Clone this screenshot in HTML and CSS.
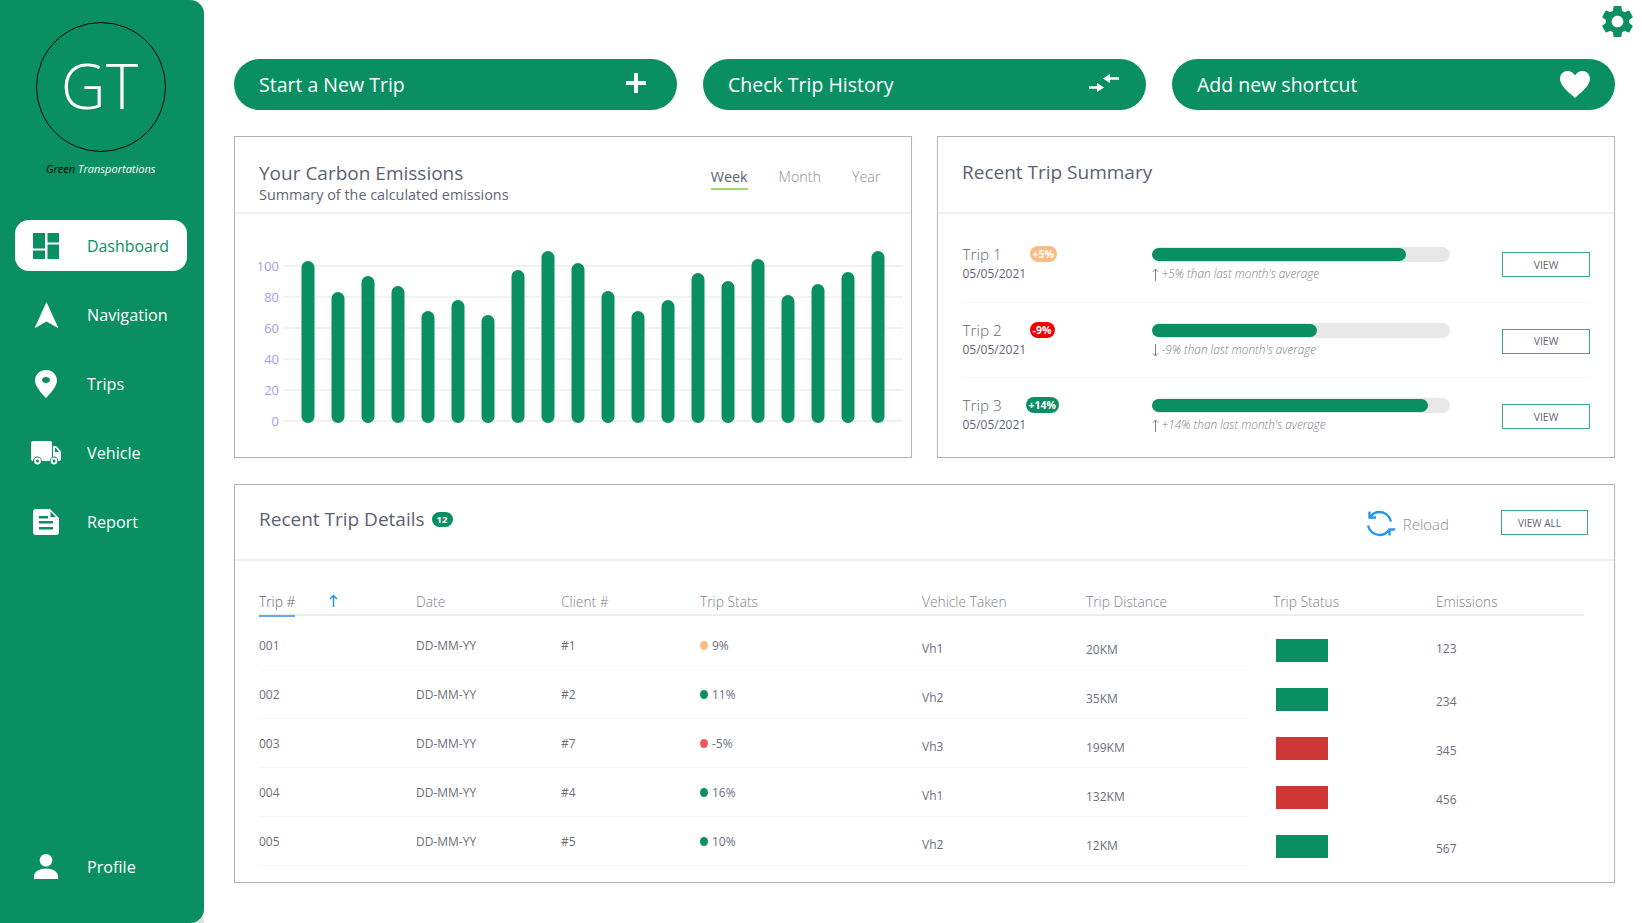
FILE: index.html
```html
<!DOCTYPE html>
<html lang="en">
<head>
    <meta charset="UTF-8">
    <title>Green Transportations</title>
    <link rel="stylesheet" href="styles.css">
</head>
<body>
<div class="app">
    <div class="side-wrap">
    <aside class="sidebar">
        <div class="logo">GT</div>
        <p class="tagline"><span class="tagline-dark">Green</span> Transportations</p>
        <nav class="nav">
            <a class="nav-item active">
                <span class="nav-icon">
                    <svg width="26" height="26" viewBox="0 0 26 26"><path d="M0 0h12v15.5H0zM0 17.5h12V26H0zM14.5 0H26v9.5H14.5zM14.5 11.5H26V26H14.5z"/></svg>
                </span>
                Dashboard
            </a>
            <a class="nav-item">
                <span class="nav-icon">
                    <svg width="23" height="26" viewBox="0 0 23 26"><path d="M11.5 0 23 25.2q.2.8-.6.6L11.5 19.5.6 25.8q-.8.2-.6-.6z"/></svg>
                </span>
                Navigation
            </a>
            <a class="nav-item">
                <span class="nav-icon">
                    <svg width="22" height="28" viewBox="0 0 22 28"><path fill-rule="evenodd" d="M11 0C4.900 0 0 4.700 0 10.500 0 17.500 11 28 11 28s11-10.500 11-17.500C22 4.700 17.100 0 11 0zm0 7c2.200 0 4 1.300 4 3s-1.800 3-4 3-4-1.300-4-3 1.800-3 4-3z"/></svg>
                </span>
                Trips
            </a>
            <a class="nav-item">
                <span class="nav-icon">
                    <svg width="30" height="24" viewBox="0 0 30 24"><path fill-rule="evenodd" d="M2 0h17a2 2 0 0 1 2 2v18H2a2 2 0 0 1-2-2V2a2 2 0 0 1 2-2zM22 5h2.500a2 2 0 0 1 1.500.7l3.400 4a2 2 0 0 1 .6 1.300V18a2 2 0 0 1-2 2h-6zm2 2v4h4l-3.300-4z"/><circle class="wheel-gap" cx="6.500" cy="20" r="4.400"/><circle cx="6.500" cy="20" r="3.400"/><circle class="wheel-gap" cx="6.500" cy="20" r="1.500"/><circle class="wheel-gap" cx="23" cy="20" r="4.400"/><circle cx="23" cy="20" r="3.400"/><circle class="wheel-gap" cx="23" cy="20" r="1.500"/></svg>
                </span>
                Vehicle
            </a>
            <a class="nav-item">
                <span class="nav-icon">
                    <svg width="26" height="26" viewBox="0 0 26 26"><path fill-rule="evenodd" d="M3 0h14l9 9v14a3 3 0 0 1-3 3H3a3 3 0 0 1-3-3V3a3 3 0 0 1 3-3zm3 7v2.500h9V7zm0 5v2.500h14V12zm0 6v2.500h14V18zM17.500 2.500V8H23z"/></svg>
                </span>
                Report
            </a>
        </nav>
        <a class="nav-item profile">
            <span class="nav-icon">
                <svg width="24" height="25" viewBox="0 0 24 25"><circle cx="12" cy="6.300" r="6.300"/><path d="M0 25v-3c0-4.500 6-7.500 12-7.500s12 3 12 7.500v3z"/></svg>
            </span>
            Profile
        </a>
    </aside>
    </div>

    <main class="main">
        <div class="topbar">
            <svg class="gear" width="31" height="31" viewBox="2.500 2.500 19 19"><path d="M19.140 12.940c.04-.3.06-.61.06-.94 0-.32-.02-.64-.07-.94l2.030-1.580a.49.49 0 0 0 .12-.61l-1.920-3.320a.488.488 0 0 0-.59-.22l-2.390.96c-.5-.38-1.030-.7-1.620-.94l-.36-2.540a.484.484 0 0 0-.48-.41h-3.840c-.24 0-.43.17-.47.41l-.36 2.540c-.59.24-1.130.57-1.620.94l-2.390-.96c-.22-.08-.47 0-.59.22L2.740 8.870c-.12.21-.08.47.12.61l2.030 1.580c-.05.3-.09.63-.09.94s.02.64.07.94l-2.030 1.580a.49.49 0 0 0-.12.61l1.920 3.320c.12.22.37.29.59.22l2.390-.96c.5.38 1.030.7 1.620.94l.36 2.540c.05.24.24.41.48.41h3.840c.24 0 .44-.17.47-.41l.36-2.540c.59-.24 1.130-.56 1.620-.94l2.390.96c.22.08.47 0 .59-.22l1.920-3.320c.12-.22.07-.47-.12-.61l-2.010-1.580zM12 15.600c-1.980 0-3.600-1.620-3.600-3.600s1.620-3.600 3.600-3.600 3.600 1.620 3.600 3.600-1.620 3.600-3.600 3.600z"/></svg>
        </div>

        <div class="actions">
            <a class="action">Start a New Trip
                <svg class="action-plus" width="20" height="20" viewBox="0 0 20 20"><path d="M8 0h4v8h8v4h-8v8H8v-8H0V8h8z"/></svg>
            </a>
            <a class="action">Check Trip History
                <svg class="action-swap" width="30" height="20" viewBox="0 0 30 20"><path d="M14 4.500 21 0v3.300h9v2.400h-9V9zM15 13.500 8 9v3.300H0v2.400h8V18z"/></svg>
            </a>
            <a class="action action-short">Add new shortcut
                <svg class="action-heart" width="30" height="27" viewBox="0 0 30 27"><path d="M15 27C11 23 0 15.500 0 7.800 0 3.300 3.500 0 7.500 0 10.700 0 13.600 1.800 15 4.500 16.400 1.800 19.300 0 22.500 0 26.500 0 30 3.300 30 7.800 30 15.500 19 23 15 27z"/></svg>
            </a>
        </div>

        <div class="cards">
            <section class="card">
                <header class="card-head card-head-sub">
                    <div>
                        <h2 class="card-title">Your Carbon Emissions</h2>
                        <p class="card-sub">Summary of the calculated emissions</p>
                    </div>
                    <div class="tabs">
                        <span class="tab tab-on">Week</span>
                        <span class="tab">Month</span>
                        <span class="tab">Year</span>
                    </div>
                </header>
                <svg class="chart" width="675" height="243" viewBox="235 214 675 243">
                    <g class="grid-lines">
                        <path d="M283 266H903M283 297H903M283 328H903M283 359H903M283 390H903M283 421H903"/>
                    </g>
                    <g class="axis">
                        <text x="279" y="271">100</text>
                        <text x="279" y="302">80</text>
                        <text x="279" y="333">60</text>
                        <text x="279" y="364">40</text>
                        <text x="279" y="395">20</text>
                        <text x="279" y="426">0</text>
                    </g>
                    <g class="bars">
                        <rect x="301.500" y="261" width="13" height="162" rx="6.500"/>
                        <rect x="331.500" y="292" width="13" height="131" rx="6.500"/>
                        <rect x="361.500" y="276" width="13" height="147" rx="6.500"/>
                        <rect x="391.500" y="286" width="13" height="137" rx="6.500"/>
                        <rect x="421.500" y="311" width="13" height="112" rx="6.500"/>
                        <rect x="451.500" y="300" width="13" height="123" rx="6.500"/>
                        <rect x="481.500" y="315" width="13" height="108" rx="6.500"/>
                        <rect x="511.500" y="270" width="13" height="153" rx="6.500"/>
                        <rect x="541.500" y="251" width="13" height="172" rx="6.500"/>
                        <rect x="571.500" y="263" width="13" height="160" rx="6.500"/>
                        <rect x="601.500" y="291" width="13" height="132" rx="6.500"/>
                        <rect x="631.500" y="311" width="13" height="112" rx="6.500"/>
                        <rect x="661.500" y="300" width="13" height="123" rx="6.500"/>
                        <rect x="691.500" y="273" width="13" height="150" rx="6.500"/>
                        <rect x="721.500" y="281" width="13" height="142" rx="6.500"/>
                        <rect x="751.500" y="259" width="13" height="164" rx="6.500"/>
                        <rect x="781.500" y="295" width="13" height="128" rx="6.500"/>
                        <rect x="811.500" y="284" width="13" height="139" rx="6.500"/>
                        <rect x="841.500" y="272" width="13" height="151" rx="6.500"/>
                        <rect x="871.500" y="251" width="13" height="172" rx="6.500"/>
                    </g>
                </svg>
            </section>

            <section class="card">
                <header class="card-head card-head-plain">
                    <h2 class="card-title">Recent Trip Summary</h2>
                </header>
                <div class="summary">
                    <div class="sum-row">
                        <div class="sum-name">
                            <div class="sum-line"><span class="sum-trip">Trip 1</span><span class="pill pill-orange">+5%</span></div>
                            <div class="sum-date">05/05/2021</div>
                        </div>
                        <div>
                            <div class="track"><div class="fill" style="width: 254px"></div></div>
                            <div class="sum-note"><svg class="sum-arrow" width="7" height="13" viewBox="0 0 7 13"><path d="M3.500 13V1M.8 3.800 3.500 1l2.700 2.800"/></svg> +5% than last month's average</div>
                        </div>
                        <a class="btn btn-view">VIEW</a>
                    </div>
                    <div class="sum-row">
                        <div class="sum-name">
                            <div class="sum-line"><span class="sum-trip">Trip 2</span><span class="pill pill-red">-9%</span></div>
                            <div class="sum-date">05/05/2021</div>
                        </div>
                        <div>
                            <div class="track"><div class="fill" style="width: 165px"></div></div>
                            <div class="sum-note"><svg class="sum-arrow" width="7" height="13" viewBox="0 0 7 13"><path d="M3.500 0v12M.8 9.200 3.500 12l2.700-2.800"/></svg> -9% than last month's average</div>
                        </div>
                        <a class="btn btn-view">VIEW</a>
                    </div>
                    <div class="sum-row">
                        <div class="sum-name">
                            <div class="sum-line"><span class="sum-trip">Trip 3</span><span class="pill pill-green">+14%</span></div>
                            <div class="sum-date">05/05/2021</div>
                        </div>
                        <div>
                            <div class="track"><div class="fill" style="width: 276px"></div></div>
                            <div class="sum-note"><svg class="sum-arrow" width="7" height="13" viewBox="0 0 7 13"><path d="M3.500 13V1M.8 3.800 3.500 1l2.700 2.800"/></svg> +14% than last month's average</div>
                        </div>
                        <a class="btn btn-view">VIEW</a>
                    </div>
                </div>
            </section>
        </div>

        <section class="card card-wide">
            <header class="card-head">
                <div class="details-title">
                    <h2 class="card-title">Recent Trip Details</h2>
                    <span class="count">12</span>
                </div>
                <div class="details-tools">
                    <a class="reload">
                        <svg width="31" height="27" viewBox="0 0 31 27"><path d="M27 11.500C25.800 5.800 20.800 2 15.500 2 12 2 8.800 3.500 6.500 6.500M4 15.500C5.200 21.200 10.200 25 15.500 25 19 25 22.200 23.500 24.500 20.500"/><path d="M5.500 1.500V7.500H12M25.500 25.500V19.500H31"/></svg>
                        Reload
                    </a>
                    <a class="btn btn-all">VIEW ALL</a>
                </div>
            </header>
            <div class="table">
                <div class="t-row t-head">
                    <div class="t-first"><span class="sorted">Trip #</span><svg class="sort-arrow" width="9" height="13" viewBox="0 0 9 13"><path d="M4.500 13V1.500M1 5l3.500-3.500L8 5"/></svg></div>
                    <div>Date</div>
                    <div>Client #</div>
                    <div>Trip Stats</div>
                    <div>Vehicle Taken</div>
                    <div>Trip Distance</div>
                    <div>Trip Status</div>
                    <div>Emissions</div>
                </div>
                <div class="t-row t-body t-top">
                    <div>001</div><div>DD-MM-YY</div><div>#1</div>
                    <div><span class="dot dot-orange"></span>9%</div>
                    <div class="c-veh">Vh1</div><div class="c-dist">20KM</div>
                    <div class="c-state"><span class="status"></span></div>
                    <div class="c-emis">123</div>
                </div>
                <div class="t-row t-body">
                    <div>002</div><div>DD-MM-YY</div><div>#2</div>
                    <div><span class="dot"></span>11%</div>
                    <div class="c-veh">Vh2</div><div class="c-dist">35KM</div>
                    <div class="c-state"><span class="status"></span></div>
                    <div class="c-emis">234</div>
                </div>
                <div class="t-row t-body">
                    <div>003</div><div>DD-MM-YY</div><div>#7</div>
                    <div><span class="dot dot-red"></span>-5%</div>
                    <div class="c-veh">Vh3</div><div class="c-dist">199KM</div>
                    <div class="c-state"><span class="status status-bad"></span></div>
                    <div class="c-emis">345</div>
                </div>
                <div class="t-row t-body">
                    <div>004</div><div>DD-MM-YY</div><div>#4</div>
                    <div><span class="dot"></span>16%</div>
                    <div class="c-veh">Vh1</div><div class="c-dist">132KM</div>
                    <div class="c-state"><span class="status status-bad"></span></div>
                    <div class="c-emis">456</div>
                </div>
                <div class="t-row t-body">
                    <div>005</div><div>DD-MM-YY</div><div>#5</div>
                    <div><span class="dot"></span>10%</div>
                    <div class="c-veh">Vh2</div><div class="c-dist">12KM</div>
                    <div class="c-state"><span class="status"></span></div>
                    <div class="c-emis">567</div>
                </div>
            </div>
        </section>
    </main>
</div>
</body>
</html>
```

FILE: styles.css
```css
* {
    box-sizing: border-box;
}

body {
    margin: 0;
    font-family: "Open Sans", "Noto Sans", sans-serif;
    background: #fff;
    color: #5f6675;
    overflow: hidden;
}

h2, p {
    margin: 0;
}

.app {
    display: flex;
    height: 923px;
}

/* sidebar */
.side-wrap {
    width: 204px;
    flex: none;
    background: linear-gradient(#fff calc(100% - 14px), #e2e2e2 0);
}

.sidebar {
    height: 100%;
    background: #098f62;
    border-radius: 0 14px 14px 0;
    display: flex;
    flex-direction: column;
    padding: 22px 17px 31px 15px;
    color: #fff;
}

.logo {
    width: 130px;
    height: 130px;
    margin: 0 auto 0 21px;
    padding: 0 3px 5px 0;
    border: 1.5px solid #000;
    border-radius: 50%;
    display: flex;
    align-items: center;
    justify-content: center;
    font-size: 62px;
    font-weight: 300;
}

.tagline {
    margin-top: 9px;
    margin-left: 31px;
    font-size: 11px;
    font-style: italic;
    white-space: nowrap;
}

.tagline-dark {
    color: #000;
}

.nav {
    margin-top: 44px;
    display: flex;
    flex-direction: column;
    gap: 18px;
}

.nav-item {
    height: 51px;
    display: flex;
    align-items: center;
    gap: 10px;
    font-size: 16.2px;
    border-radius: 14px;
}

.nav-item.active {
    background: #fff;
    color: #098f62;
    font-size: 15.9px;
}

.nav-icon {
    width: 62px;
    display: flex;
    justify-content: center;
}

.nav-icon svg {
    fill: currentColor;
}

.wheel-gap {
    fill: #098f62;
}

.profile {
    margin-top: auto;
}

/* main column */
.main {
    flex: 1;
    padding: 0 27px 0 30px;
}

.topbar {
    height: 59px;
    padding-top: 6px;
    margin-right: -18px;
    display: flex;
    justify-content: flex-end;
}

.gear {
    fill: #098f62;
}

.actions {
    display: grid;
    grid-template-columns: repeat(3, 443px);
    gap: 26px;
}

.action {
    height: 51px;
    border-radius: 26px;
    background: #098f62;
    color: #fff;
    font-size: 19.5px;
    display: flex;
    align-items: center;
    justify-content: space-between;
    padding: 0 31px 0 25px;
}

.action svg {
    fill: #fff;
}

.action-plus {
    margin: -4px 0 0 0;
}

.action-swap {
    margin: -2px -4px 0 0;
}

.action-short {
    padding-right: 25px;
}

.action-heart {
    margin-top: 0;
}

.cards {
    display: grid;
    grid-template-columns: 677.5px 677.5px;
    gap: 25.5px;
    margin-top: 26px;
}

.card {
    height: 322px;
    border: 1px solid #b3b3b3;
    background: #fff;
    box-shadow: 0 2px 4px rgba(0, 0, 0, 0.03);
}

.card-head {
    height: 77px;
    padding: 0 28px 7px 24px;
    border-bottom: 2px solid #eeeeee;
    display: flex;
    align-items: center;
    justify-content: space-between;
}

.card-head-sub {
    padding: 14px 30px 0 24px;
}

.card-head-plain {
    padding-bottom: 6px;
}

.card-title {
    font-size: 19px;
    font-weight: 400;
    color: #5a6274;
}

.card-sub {
    font-size: 14.4px;
    margin-top: -1px;
    color: #5f6675;
}

.tabs {
    display: flex;
    gap: 31px;
    margin-bottom: 6px;
    font-size: 14.3px;
    color: #8b8f99;
    font-weight: 300;
}

.tab-on {
    color: #5a6274;
    font-weight: 400;
    padding-bottom: 2px;
    border-bottom: 2px solid #a4d96c;
}

/* chart */
.chart {
    display: block;
}

.grid-lines path {
    stroke: #f1f1f1;
    stroke-width: 2;
    fill: none;
}

.axis text {
    font-size: 13px;
    fill: #a99bea;
    text-anchor: end;
}

.bars rect {
    fill: #098f62;
}

/* summary */
.summary {
    padding: 13px 23.5px 0 24.5px;
}

.sum-row {
    height: 75.5px;
    padding-top: 20px;
    display: grid;
    grid-template-columns: 189px 298px 1fr;
    border-bottom: 1px solid #f6f6f6;
}

.sum-row:last-child {
    border-bottom: 0;
}

.sum-line {
    display: flex;
    align-items: center;
    height: 16px;
    margin-top: -1px;
}

.sum-trip {
    width: 67px;
    font-size: 15.3px;
    font-weight: 300;
}

.sum-date {
    margin-top: 3px;
    font-size: 12px;
}

.pill {
    height: 16px;
    min-width: 25px;
    padding: 0 3px;
    border-radius: 8px;
    color: #fff;
    font-size: 10.5px;
    font-weight: 700;
    display: flex;
    align-items: center;
    justify-content: center;
}

.pill-orange {
    background: #fdbb7f;
}

.pill-red {
    background: #f00000;
}

.pill-green {
    background: #098f62;
    margin-left: -4px;
}

.track {
    width: 298px;
    height: 15px;
    padding: 1px 0;
    border-radius: 8px;
    background: #e8e8e8;
}

.fill {
    height: 13px;
    border-radius: 7px;
    background: #098f62;
}

.sum-note {
    margin-top: 3px;
    font-size: 11.8px;
    font-style: italic;
    font-weight: 300;
    color: #7d8088;
}

.sum-arrow {
    fill: none;
    stroke: #7d8088;
    vertical-align: -3px;
}

.btn {
    border: 1.5px solid #3ea583;
    color: #5f6675;
    display: flex;
    align-items: center;
    justify-content: center;
    background: #fff;
}

.btn-view {
    width: 88px;
    height: 25px;
    margin: 6px 0 0 auto;
    font-size: 10.5px;
}

.sum-row:first-child .btn-view {
    margin-top: 5px;
}

/* details */
.card-wide {
    height: 399px;
    margin-top: 26px;
}

.card-wide .card-head {
    height: 76px;
    padding-right: 26px;
}

.details-title {
    display: flex;
    align-items: center;
    gap: 7px;
}

.count {
    width: 21px;
    height: 15px;
    margin-top: 1px;
    border-radius: 8px;
    background: #098f62;
    color: #fff;
    font-size: 9.5px;
    font-weight: 700;
    display: flex;
    align-items: center;
    justify-content: center;
}

.details-tools {
    display: flex;
    align-items: center;
    padding-top: 8px;
}

.reload {
    display: flex;
    align-items: center;
    gap: 8px;
    margin-top: 2px;
    font-size: 15px;
    font-weight: 300;
    color: #8d8d8d;
}

.reload svg {
    fill: none;
    stroke: #2196f3;
    stroke-width: 2.3;
    margin-left: -3px;
}

.btn-all {
    width: 87px;
    height: 25px;
    margin-left: 52px;
    padding-right: 10px;
    font-size: 10px;
}

.table {
    padding: 25px 0 0 24px;
}

.t-row {
    display: grid;
    grid-template-columns: 157px 145px 139px 222px 164px 187px 163px 148px;
    align-items: center;
    width: 1325px;
}

.t-head {
    height: 30px;
    padding-bottom: 2px;
    border-bottom: 2px solid #eeeee8;
    margin-bottom: 5px;
    font-size: 13.8px;
    font-weight: 300;
    color: #7e828c;
}

.t-first {
    display: flex;
    height: 30px;
    align-items: center;
}

.sorted {
    width: 36px;
    height: 31px;
    line-height: 31px;
    border-bottom: 2px solid #63a9f5;
    color: #5f6675;
    white-space: nowrap;
}

.sort-arrow {
    margin-left: 34px;
    margin-top: -1px;
    fill: none;
    stroke: #2196f3;
    stroke-width: 1.5;
}

.t-body {
    height: 49px;
    font-size: 12px;
    color: #6b6f7a;
    background: linear-gradient(#f5f5f5, #f5f5f5) left bottom / 990px 1px no-repeat;
}

.c-veh {
    padding-top: 5px;
}

.c-dist {
    padding-top: 8px;
}

.c-state {
    padding-top: 9px;
}

.c-emis {
    padding-top: 13px;
}

.t-top .c-emis {
    padding-top: 5px;
}

.dot {
    display: inline-block;
    width: 8px;
    height: 9px;
    margin-right: 4px;
    border-radius: 50%;
    background: #098f62;
}

.dot-orange {
    background: #fdbb7f;
}

.dot-red {
    background: #f4555a;
}

.status {
    display: block;
    width: 52px;
    height: 23px;
    margin-left: 3px;
    background: #098f62;
}

.status-bad {
    background: #cf3636;
}
```
